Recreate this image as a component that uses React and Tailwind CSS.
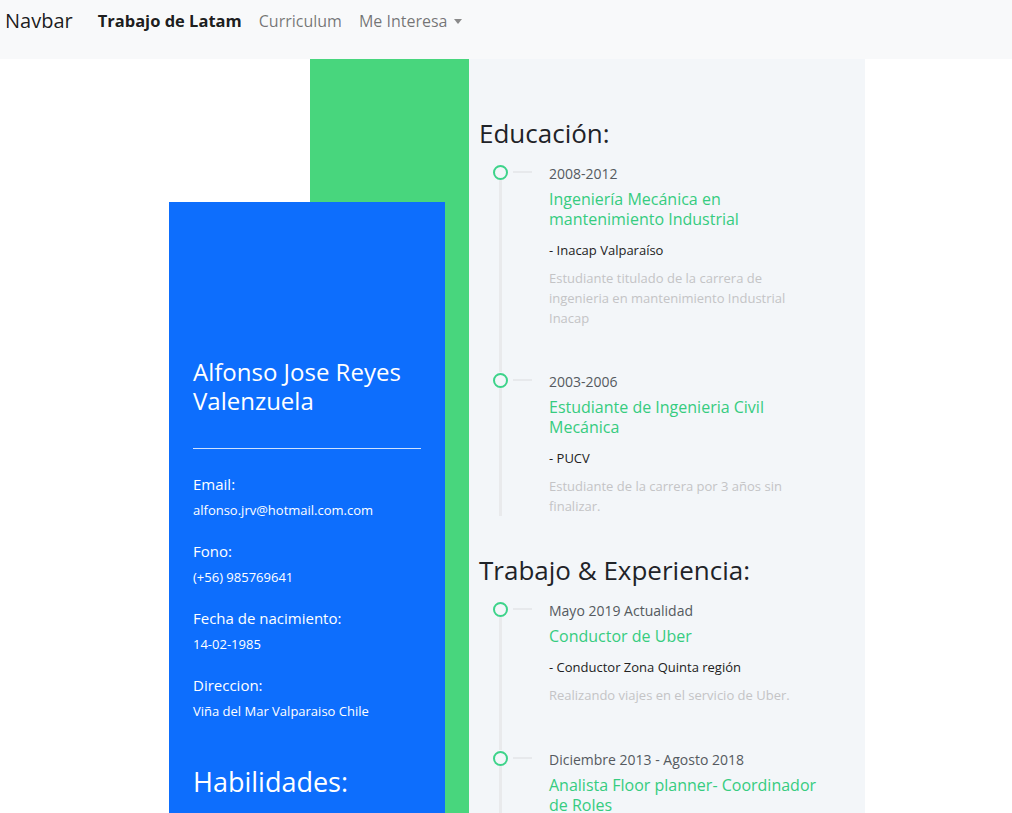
import React from "react";

const GREEN = "text-[#36cc80]";

function Item({ date, title, sub, desc, last, pb }) {
  return (
    <div className="flex">
      <div className="flex flex-col items-center w-[15px] shrink-0 pt-[1px]">
        <div className="w-[15px] h-[15px] rounded-full border-2 border-[#3dd38a] shrink-0" />
        <div className="w-[3px] flex-1 bg-[#e9eaec]" />
      </div>
      <div className="w-[19px] h-[2px] bg-[#e7e9ec] mt-[7px] ml-[5px] shrink-0" />
      <div className={`ml-[17px] w-[300px] ${last ? "pb-[0px]" : pb || "pb-[44px]"}`}>
        <div className="text-[14px] leading-[20px] text-[#555a60]">{date}</div>
        <div className={`mt-[5px] text-[16px] leading-[20px] ${GREEN} whitespace-nowrap`}>{title}</div>
        <div className="mt-[11px] text-[13px] leading-[20px] text-[#222]">{sub}</div>
        <div className="mt-[8px] text-[13px] leading-[20px] text-[#c4c4c6] whitespace-nowrap">{desc}</div>
      </div>
    </div>
  );
}

function Info({ label, value, first }) {
  return (
    <div className={first ? "" : "mt-[21px]"}>
      <div className="text-[15px] leading-[20px]">{label}</div>
      <div className="mt-[6px] text-[13px] leading-[20px]">{value}</div>
    </div>
  );
}

export default function App() {
  return (
    <div className="min-h-[813px] bg-white font-['Open_Sans',sans-serif] overflow-hidden">
      <nav className="h-[59px] bg-[#f8f9fa] flex items-start pt-[9px]">
        <span className="ml-[5px] text-[20px] leading-[24px] text-black/90">Navbar</span>
        <div className="ml-[25px] flex items-center gap-[17px] text-[16px] leading-[24px]">
          <span className="font-bold text-[16.5px] text-black/90">Trabajo de Latam</span>
          <span className="text-black/55">Curriculum</span>
          <span className="text-black/55 flex items-center">
            Me Interesa
            <span className="ml-[7px] inline-block w-0 h-0 border-l-[4px] border-r-[4px] border-t-[5px] border-l-transparent border-r-transparent border-t-[#8a8a8a]" />
          </span>
        </div>
      </nav>
      <div className="flex">
        <div className="w-[310px] shrink-0" />
        <div className="w-[159px] shrink-0 bg-[#48d67d] min-h-[760px]">
          <div className="ml-[-141px] mt-[143px] w-[276px] bg-[#0d6efd] text-white px-[24px] pt-[155px] pb-[60px] relative">
            <h1 className="text-[24px] leading-[29px]">
              Alfonso Jose Reyes
              <br />
              Valenzuela
            </h1>
            <div className="mt-[33px] h-[1px] bg-white/80" />
            <div className="mt-[25px]">
              <Info first label="Email:" value="alfonso.jrv@hotmail.com.com" />
              <Info label="Fono:" value="(+56) 985769641" />
              <Info label="Fecha de nacimiento:" value="14-02-1985" />
              <Info label="Direccion:" value="Viña del Mar Valparaiso Chile" />
            </div>
            <h2 className="mt-[45px] text-[27px] leading-[32px]">Habilidades:</h2>
          </div>
        </div>
        <div className="w-[396px] shrink-0 bg-[#f3f6f9] pl-[10px] pt-[59px] pb-[40px]">
          <h2 className="text-[26px] leading-[31px] text-[#1f2328]">Educación:</h2>
          <div className="mt-[15px] ml-[14px]">
            <Item
              date="2008-2012"
              title={<>Ingeniería Mecánica en<br />mantenimiento Industrial</>}
              sub="- Inacap Valparaíso"
              desc={<>Estudiante titulado de la carrera de<br />ingenieria en mantenimiento Industrial<br />Inacap</>}
            />
            <Item
              last
              date="2003-2006"
              title={<>Estudiante de Ingenieria Civil<br />Mecánica</>}
              sub="- PUCV"
              desc={<>Estudiante de la carrera por 3 años sin<br />finalizar.</>}
            />
          </div>
          <h2 className="mt-[39px] text-[26px] leading-[31px] text-[#1f2328]">Trabajo &amp; Experiencia:</h2>
          <div className="mt-[15px] ml-[14px]">
            <Item
              pb="pb-[45px]"
              date="Mayo 2019 Actualidad"
              title="Conductor de Uber"
              sub="- Conductor Zona Quinta región"
              desc="Realizando viajes en el servicio de Uber."
            />
            <Item
              last
              date="Diciembre 2013 - Agosto 2018"
              title={<>Analista Floor planner- Coordinador<br />de Roles</>}
              sub="- Falabella"
              desc="Coordinación de roles y planificación."
            />
          </div>
        </div>
        <div className="flex-1" />
      </div>
    </div>
  );
}
